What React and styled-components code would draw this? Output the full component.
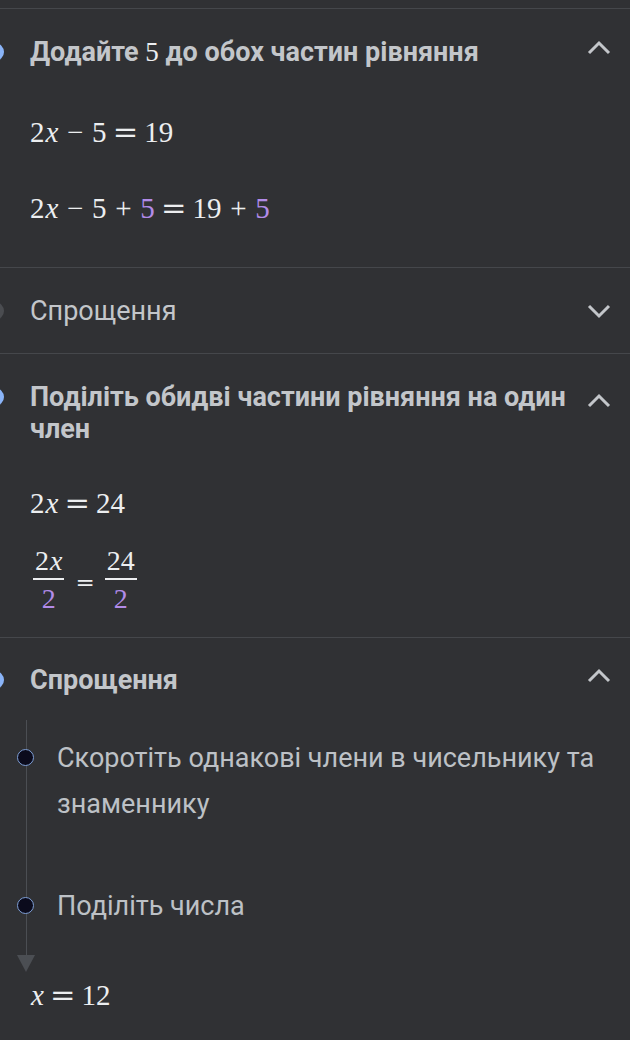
import React from "react";
import styled, { createGlobalStyle } from "styled-components";

const Global = createGlobalStyle`
  html, body {
    margin: 0;
    padding: 0;
    background: #303134;
  }
  body {
    font-family: Roboto, "Noto Sans", sans-serif;
    -webkit-font-smoothing: antialiased;
  }
`;

const Page = styled.div`
  width: 630px;
  min-height: 1040px;
  padding-top: 8px;
  background: #303134;
  overflow: hidden;
`;

const Section = styled.div`
  border-top: 1px solid #45474b;
`;

const Header = styled.div`
  display: flex;
  align-items: flex-start;
  padding: ${({ $top }) => $top || 27}px 19px ${({ $bottom }) => $bottom || 0}px 0;
`;

const Marker = styled.span`
  flex: none;
  width: 18px;
  height: 18px;
  border-radius: 50%;
  margin: 7px 26px 0 -14px;
  background: ${({ $muted }) => ($muted ? "#4a4c50" : "#8ab4f8")};
`;

const Title = styled.div`
  flex: 1;
  font-size: 27px;
  line-height: 32px;
  font-weight: ${({ $bold }) => ($bold ? 700 : 400)};
  color: #c3c6ca;
  padding-right: 18px;
`;

const Chevron = styled.svg`
  flex: none;
  width: 24px;
  height: 32px;
  margin-top: ${({ $offset }) => $offset || 0}px;
`;

const Body = styled.div`
  padding: ${({ $top }) => $top}px 0 ${({ $bottom }) => $bottom}px 30px;
  display: flex;
  flex-direction: column;
  gap: ${({ $gap }) => $gap || 0}px;
`;

const MathLine = styled.div`
  font-family: "Liberation Serif", "DejaVu Serif", serif;
  font-size: 29px;
  line-height: 40px;
  height: 40px;
  color: #eceef0;
  white-space: nowrap;
`;

const V = styled.i`
  font-style: italic;
  margin-left: 1px;
`;

const Op = styled.span`
  margin: 0 0.3em;
`;

const Rel = styled.span`
  font-family: "DejaVu Serif", serif;
  font-size: 1.05em;
  line-height: 0;
  margin: 0 0.2em;
`;

const Hi = styled.span`
  color: #b28be8;
`;

const FracRow = styled.div`
  display: flex;
  align-items: center;
  font-family: "Liberation Serif", "DejaVu Serif", serif;
  font-size: 28px;
  color: #eceef0;
  padding-left: 3px;
`;

const Frac = styled.span`
  display: inline-flex;
  flex-direction: column;
  align-items: center;
`;

const Num = styled.span`
  line-height: 32px;
  padding: 0 2px 1px;
  border-bottom: 2px solid #eceef0;
`;

const Den = styled.span`
  line-height: 38px;
  color: #b28be8;
`;

const FracEq = styled.span`
  font-family: "DejaVu Serif", serif;
  font-size: 23px;
  margin: 0 10px 0 11px;
`;

const Rail = styled.div`
  display: flex;
  flex-direction: column;
  gap: 56px;
  padding: 15px 0 26px;
  margin-top: 24px;
  background-image: linear-gradient(#4b4e53, #4b4e53);
  background-repeat: no-repeat;
  background-size: 1px 100%;
  background-position: 26px 0;
`;

const Step = styled.div`
  display: grid;
  grid-template-columns: 57px 1fr;
  align-items: start;
`;

const Bullet = styled.span`
  width: 15px;
  height: 15px;
  margin: 14px 0 0 17px;
  border-radius: 50%;
  background: #0b0b1c;
  border: 1.5px solid #7e9fd6;
`;

const StepText = styled.div`
  font-size: 27px;
  line-height: 46px;
  color: #bdc1c6;
  padding-right: 24px;
`;

const Arrow = styled.div`
  width: 0;
  height: 0;
  margin-left: 17px;
  border-left: 9px solid transparent;
  border-right: 9px solid transparent;
  border-top: 17px solid #4b4e53;
`;

const Result = styled.div`
  padding: 3px 0 0 30px;
`;

const Up = ({ offset }) => (
  <Chevron viewBox="0 0 24 32" $offset={offset}>
    <path d="M2 21 L12 11 L22 21" fill="none" stroke="#c3c6ca" strokeWidth="3" />
  </Chevron>
);

const Down = () => (
  <Chevron viewBox="0 0 24 32">
    <path d="M2 11 L12 21 L22 11" fill="none" stroke="#c3c6ca" strokeWidth="3" />
  </Chevron>
);

const Serif5 = styled.span`
  font-family: "Liberation Serif", serif;
  font-weight: 400;
  color: #eceef0;
`;

export default function App() {
  return (
    <Page>
      <Global />
      <Section>
        <Header>
          <Marker />
          <Title $bold>
            Додайте <Serif5>5</Serif5> до обох частин рівняння
          </Title>
          <Up offset={-4} />
        </Header>
        <Body $top={44} $bottom={39} $gap={36}>
          <MathLine>
            2<V>x</V>
            <Op>−</Op>5<Rel>=</Rel>19
          </MathLine>
          <MathLine>
            2<V>x</V>
            <Op>−</Op>5<Op>+</Op>
            <Hi>5</Hi>
            <Rel>=</Rel>19<Op>+</Op>
            <Hi>5</Hi>
          </MathLine>
        </Body>
      </Section>

      <Section>
        <Header $bottom={26}>
          <Marker $muted />
          <Title>Спрощення</Title>
          <Down />
        </Header>
      </Section>

      <Section>
        <Header>
          <Marker />
          <Title $bold>Поділіть обидві частини рівняння на один член</Title>
          <Up offset={4} />
        </Header>
        <Body $top={38} $bottom={19} $gap={22}>
          <MathLine>
            2<V>x</V>
            <Rel>=</Rel>24
          </MathLine>
          <FracRow>
            <Frac>
              <Num>
                2<V>x</V>
              </Num>
              <Den>2</Den>
            </Frac>
            <FracEq>=</FracEq>
            <Frac>
              <Num>24</Num>
              <Den>2</Den>
            </Frac>
          </FracRow>
        </Body>
      </Section>

      <Section>
        <Header $top={26}>
          <Marker />
          <Title $bold>Спрощення</Title>
          <Up offset={-4} />
        </Header>
        <Rail>
          <Step>
            <Bullet />
            <StepText>Скоротіть однакові члени в чисельнику та знаменнику</StepText>
          </Step>
          <Step>
            <Bullet />
            <StepText>Поділіть числа</StepText>
          </Step>
        </Rail>
        <Arrow />
        <Result>
          <MathLine>
            <V>x</V>
            <Rel>=</Rel>12
          </MathLine>
        </Result>
      </Section>
    </Page>
  );
}
